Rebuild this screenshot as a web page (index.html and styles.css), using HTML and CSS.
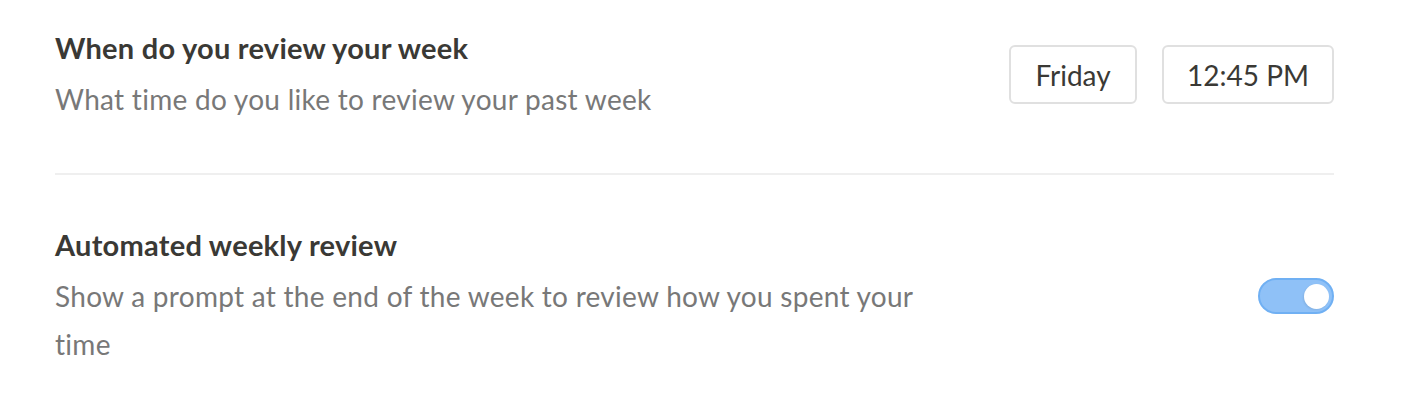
FILE: index.html
```html
<!DOCTYPE html>
<html>
<head>
<meta charset="utf-8">
<link rel="stylesheet" href="styles.css">
</head>
<body>
<div class="settings">
  <div class="row row-first">
    <div class="text">
      <div class="title">When do you review your week</div>
      <div class="desc">What time do you like to review your past week</div>
    </div>
    <div class="controls">
      <button class="btn btn-day">Friday</button>
      <button class="btn btn-time">12:45 PM</button>
    </div>
  </div>
  <div class="divider"></div>
  <div class="row row-second">
    <div class="text text-wide">
      <div class="title">Automated weekly review</div>
      <div class="desc">Show a prompt at the end of the week to review how you spent your time</div>
    </div>
    <div class="controls">
      <div class="toggle"><div class="knob"></div></div>
    </div>
  </div>
</div>
</body>
</html>
```

FILE: styles.css
```css
html, body {
  margin: 0;
  padding: 0;
  background: #ffffff;
}
body {
  font-family: Lato, "Noto Sans", sans-serif;
  width: 1404px;
  height: 406px;
  overflow: hidden;
}
.settings {
  padding: 0 70px 0 55px;
}
.row {
  display: flex;
  justify-content: space-between;
}
.row-first {
  padding-top: 30px;
  padding-bottom: 50px;
}
.row-second {
  padding-top: 52px;
}
.title {
  font-size: 29px;
  font-weight: 700;
  color: #3a3935;
  line-height: 36px;
  letter-spacing: 0.25px;
}
.desc {
  font-size: 28px;
  color: #787878;
  line-height: 48px;
  margin-top: 9px;
  letter-spacing: 0.28px;
}
.text-wide {
  width: 890px;
}
.controls {
  display: flex;
  gap: 25px;
  align-items: flex-start;
}
.row-first .controls {
  padding-top: 15px;
}
.btn {
  font-family: inherit;
  height: 59px;
  box-sizing: border-box;
  border: 2px solid #e0e0e0;
  border-radius: 6px;
  background: #fff;
  font-size: 28px;
  color: #3a3935;
  padding: 0;
}
.btn-day { width: 128px; }
.btn-time { width: 172px; }
.row-second .controls {
  padding-top: 51px;
}
.toggle {
  width: 76px;
  height: 36px;
  box-sizing: border-box;
  border-radius: 18px;
  background: #8fc1f7;
  border: 2px solid #70b0f3;
  display: flex;
  align-items: center;
  justify-content: flex-end;
  padding-right: 3px;
}
.knob {
  width: 25px;
  height: 25px;
  border-radius: 50%;
  background: #fff;
  box-shadow: -1px 1px 2px rgba(0,0,0,0.08);
}
.divider {
  height: 2px;
  background: #efefef;
}
```
